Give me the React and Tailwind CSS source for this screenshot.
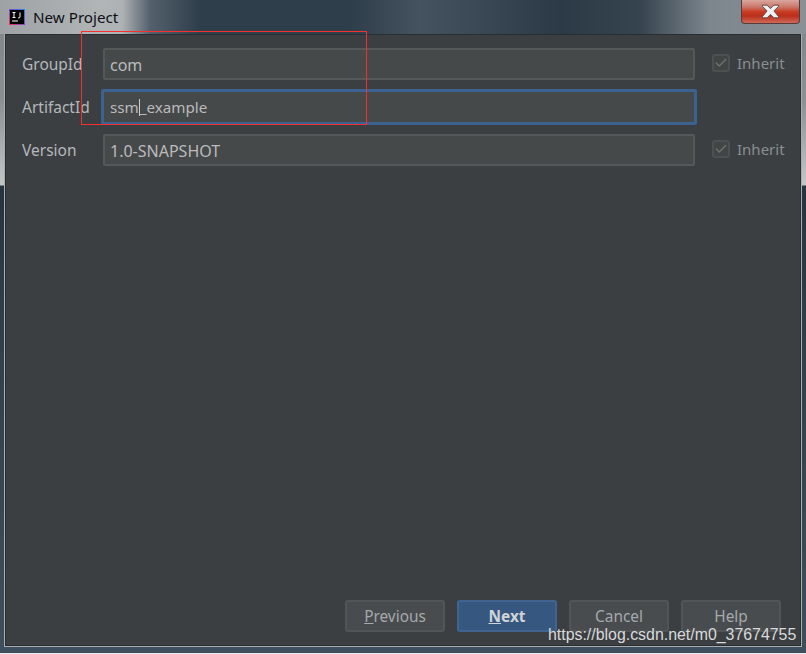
import { Check } from 'lucide-react';

function Field({ label, value, focused, inherit }) {
  return (
    <div className="flex items-center h-[42px]">
      <label className="w-[81px] shrink-0 pt-[2px] text-[15.5px] text-[#b4b8bb]">{label}</label>
      {focused ? (
        <div className="w-[596px] h-[36px] -ml-[2px] border-[3px] border-[#3b6290] rounded-[2px] bg-[#45494a] flex items-center pl-[6px] text-[15.2px] text-[#bbbbbb]">
          ssm<span className="inline-block w-px h-[17px] bg-[#cccccc]" />_example
        </div>
      ) : (
        <div className="w-[592px] h-[32px] border-2 border-[#555859] rounded-[2px] bg-[#45494a] flex items-center pl-[5px] pt-[2px] text-[16px] text-[#bbbbbb]">
          {value}
        </div>
      )}
      {inherit && (
        <div className="ml-[17px] flex items-center -mt-[2px]">
          <span className="w-[18px] h-[18px] border-2 border-[#4c5051] rounded-[3px] bg-[#424546] flex items-center justify-center">
            <Check size={14} strokeWidth={2.5} className="text-[#6d7172]" />
          </span>
          <span className="ml-[7px] text-[15px] text-[#8a8e90]">Inherit</span>
        </div>
      )}
    </div>
  );
}

function DialogButton({ children, primary }) {
  return (
    <button
      type="button"
      className={`w-[100px] h-[32px] pt-[2px] rounded-[3px] border-2 text-[15.4px] ${
        primary
          ? 'border-[#40648f] bg-[#365880] text-[#d0d4d8] font-bold'
          : 'border-[#515556] bg-[#484c4e] text-[#a5a9ab]'
      }`}
    >
      {children}
    </button>
  );
}

export default function App() {
  return (
    <div className="relative w-[806px] h-[654px] overflow-hidden bg-[linear-gradient(180deg,#7d8489_0px,#8b8f92_100px,#c4c6c6_185px,#26333f_186px,#2f3d49_300px,#3f4e5c_653px)] font-['Noto_Sans','Open_Sans',sans-serif]">
      {/* title bar */}
      <div className="h-[34px] flex items-center pl-[9px] relative bg-[linear-gradient(90deg,#9ea2a5_0px,#b2b5b6_100px,#aeb2b4_122px,#54616d_150px,#2f3e4b_200px,#2f3e4b_350px,#45525f_420px,#2c3a47_560px,#36444f_640px,#7d868d_710px,#8a9196_806px)]">
        <svg width="16" height="16" viewBox="0 0 16 16" className="shrink-0">
          <defs>
            <linearGradient id="ij" x1="0" y1="1" x2="1" y2="0">
              <stop offset="0" stopColor="#fc2a54" />
              <stop offset="0.5" stopColor="#7b4ac8" />
              <stop offset="1" stopColor="#1e88f0" />
            </linearGradient>
          </defs>
          <rect width="16" height="16" fill="url(#ij)" />
          <rect x="1" y="1" width="14" height="14" fill="#000" />
          <rect x="3" y="11.5" width="6" height="1" fill="#fff" />
          <path d="M3.5 3.5h3M5 3.5v5M3.5 8.5h3M11 3.5v4.5q0 1-2 1" stroke="#fff" strokeWidth="1" fill="none" />
        </svg>
        <span className="ml-[8px] pt-[1px] text-[15.2px] text-[#0c1116]">New Project</span>

        {/* close button */}
        <div className="absolute left-[741px] top-0 w-[59px] h-[24px] rounded-b-[4px] border border-[#5a3a38] border-t-0 bg-[linear-gradient(180deg,#d9a79e_0%,#c9786a_30%,#c9391f_52%,#b9301c_70%,#d06a58_100%)] flex items-center justify-center">
          <svg width="19" height="15" viewBox="0 0 16 13">
            <path d="M1 1h4l3 3 3-3h4v1l-4 4 4 5v1h-4l-3-3-3 3H1v-1l4-5-4-4z" fill="#eef0f2" stroke="#5c4644" strokeWidth="0.8" />
          </svg>
        </div>
      </div>

      {/* dialog body */}
      <div className="mx-[5px] w-[796px] h-[612px] border border-[#2a2e31] outline outline-1 outline-[#a8adb1] bg-[#3c3f41] flex flex-col gap-[1px] pl-[16px] pt-[8px]">
        <Field label="GroupId" value="com" inherit />
        <Field label="ArtifactId" focused />
        <Field label="Version" value="1.0-SNAPSHOT" inherit />

        <div className="mt-auto mb-[13px] ml-[323px] flex gap-[12px]">
          <DialogButton><span className="underline">P</span>revious</DialogButton>
          <DialogButton primary><span className="underline">N</span>ext</DialogButton>
          <DialogButton>Cancel</DialogButton>
          <DialogButton>Help</DialogButton>
        </div>
      </div>

      {/* window bottom edge */}
      <div className="absolute left-0 right-0 bottom-0 h-px bg-[#e8eaec]" />

      {/* annotation box */}
      <div className="absolute left-[81px] top-[31px] w-[286px] h-[94px] border border-[#f5302f]" />

      {/* watermark */}
      <span className="absolute left-[548px] top-[625px] text-[15.9px] leading-5 text-[#d8dadb] font-['Liberation_Sans',sans-serif]">
        https://blog.csdn.net/m0_37674755
      </span>
    </div>
  );
}
